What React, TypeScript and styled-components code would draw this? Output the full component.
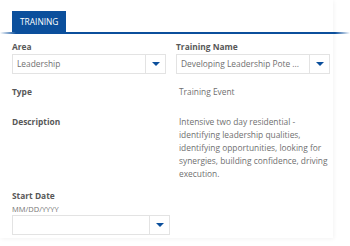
import React from "react";
import styled, { createGlobalStyle } from "styled-components";

const Global = createGlobalStyle`
  html, body { margin: 0; padding: 0; background: #ffffff; }
  body { font-family: "Open Sans", "Noto Sans", sans-serif; }
`;

const Page = styled.div`
  width: 350px;
  height: 246px;
  overflow: hidden;
  background: #fff;
`;

const Card = styled.div`
  width: 333px;
  height: 238px;
  box-shadow: 1px 1px 4px rgba(0, 0, 0, 0.05);
`;

const TabBar = styled.div`
  padding-top: 11px;
  padding-left: 12px;
  display: flex;
`;

const TabLine = styled.div`
  height: 2px;
  width: 350px;
  background: linear-gradient(
    to right,
    rgba(11, 79, 156, 0) 0px,
    #0b4f9c 16px,
    #0b4f9c 335px,
    rgba(11, 79, 156, 0) 350px
  );
`;

const Tab = styled.div`
  height: 21px;
  width: 54px;
  box-sizing: border-box;
  padding-left: 8px;
  background: #0b4f9c;
  color: #fff;
  font-size: 8.4px;
  line-height: 21px;
`;

const Form = styled.div`
  display: grid;
  grid-template-columns: 154px 154px;
  column-gap: 10px;
  padding: 7px 0 0 12px;
`;

const Field = styled.div`
  display: flex;
  flex-direction: column;
`;

const Label = styled.div`
  font-size: 8.4px;
  font-weight: 700;
  color: #585858;
  line-height: 12px;
  height: 12px;
`;

const SelectBox = styled.div<{ $w?: number }>`
  margin-top: 1px;
  height: 20px;
  width: ${(p) => (p.$w ? `${p.$w}px` : "auto")};
  border: 1px solid #e3e3e3;
  display: flex;
  align-items: stretch;
  box-sizing: border-box;
`;

const SelectText = styled.div`
  flex: 1;
  padding-left: 4px;
  font-size: 8.4px;
  color: #707070;
  line-height: 18px;
  white-space: nowrap;
  overflow: hidden;
`;

const Arrow = styled.div`
  width: 19px;
  border-left: 1px solid #e3e3e3;
  display: flex;
  align-items: center;
  justify-content: center;
`;

const Row = styled.div<{ $top: number }>`
  grid-column: 1 / span 2;
  display: grid;
  grid-template-columns: 163px 155px;
  margin-top: ${(p) => p.$top}px;
`;

const Value = styled.div`
  padding-left: 4px;
  font-size: 8.4px;
  color: #707070;
  line-height: 13.1px;
`;

const RowLabel = styled(Label)`
  line-height: 13.1px;
  height: auto;
`;

const DateBlock = styled.div`
  grid-column: 1 / span 2;
  margin-top: 9px;
  display: flex;
  flex-direction: column;
`;

const Hint = styled.div`
  font-size: 7.5px;
  color: #777;
  line-height: 10px;
  margin-top: 2px;
`;

const Caret = () => (
  <svg width="8" height="4" viewBox="0 0 8 4">
    <path d="M0 0 H8 L4 4 Z" fill="#0b4f9c" />
  </svg>
);

export default function App() {
  return (
    <>
      <Global />
      <Page>
        <Card>
          <TabBar>
            <Tab>TRAINING</Tab>
          </TabBar>
          <TabLine />
          <Form>
            <Field>
              <Label>Area</Label>
              <SelectBox>
                <SelectText>Leadership</SelectText>
                <Arrow>
                  <Caret />
                </Arrow>
              </SelectBox>
            </Field>
            <Field>
              <Label>Training Name</Label>
              <SelectBox>
                <SelectText>Developing Leadership Pote ...</SelectText>
                <Arrow>
                  <Caret />
                </Arrow>
              </SelectBox>
            </Field>
            <Row $top={11}>
              <RowLabel>Type</RowLabel>
              <Value>Training Event</Value>
            </Row>
            <Row $top={17}>
              <RowLabel>Description</RowLabel>
              <Value>
                Intensive two day residential - identifying leadership
                qualities, identifying opportunities, looking for synergies,
                building confidence, driving execution.
              </Value>
            </Row>
            <DateBlock>
              <Label>Start Date</Label>
              <Hint>MM/DD/YYYY</Hint>
              <SelectBox $w={158}>
                <SelectText />
                <Arrow>
                  <Caret />
                </Arrow>
              </SelectBox>
            </DateBlock>
          </Form>
        </Card>
      </Page>
    </>
  );
}
